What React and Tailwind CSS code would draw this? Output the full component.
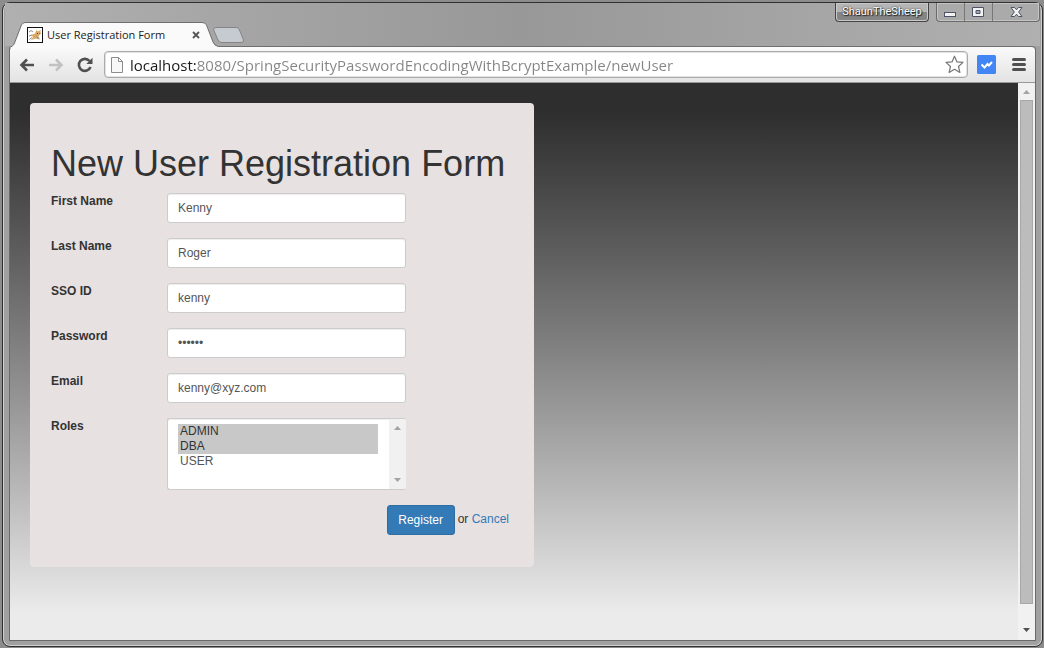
import React, { useState } from 'react';

function TabStrip() {
  return (
    <header className="flex h-[43px] shrink-0 items-start justify-between bg-linear-to-r from-[#b0b0b0] via-[#989898] to-[#b0b0b0] pl-1">
      <div className="flex pt-[19px]">
        <div className="relative h-[26px] w-[204px]">
          <svg className="absolute left-0 top-0" width="210" height="26" viewBox="0 0 210 26">
            <path d="M0 26 C3 24 4.500 24 5.500 21 L12 4 Q13 .5 16 .5 H193 Q196.500 .5 197.500 3 L204 20 Q205.500 24 209.500 24.500 V26 Z" fill="#fafafa" />
            <path d="M0 26 C3 24 4.500 24 5.500 21 L12 4 Q13 .5 16 .5 H193 Q196.500 .5 197.500 3 L204 20 Q205.500 24 209.500 24.500" fill="none" stroke="#6f6f6f" />
          </svg>
          <div className="relative flex h-[26px] items-center pl-[18px] pr-[13px]">
            <svg width="16" height="16" viewBox="0 0 16 16">
              <rect x=".5" y=".5" width="15" height="15" fill="#fff" stroke="#111" />
              <path d="M4 8 L8 6.500 L9.500 3 L11 4.500 L13.500 3 L13.500 7 L11.500 9 L13 12.500 L9 11.500 L4 13 L6 10 Z" fill="#d9a866" />
              <path d="M2 5 L4 3.500 L6 5 M2 9 L5 8 M2.500 12.500 L5 10.500 M9 9.500 L12 12" stroke="#8c8c8c" fill="none" />
              <path d="M10 6.500h1M12.500 6.500h.8" stroke="#6b4a22" />
            </svg>
            <span className="ml-1 flex-1 whitespace-nowrap font-['Open_Sans',sans-serif] text-[11px] text-[#222]">User Registration Form</span>
            <button type="button" aria-label="Close tab" className="text-[#555]">
              <svg width="8" height="8" viewBox="0 0 8 8">
                <path d="M1 1 L7 7 M7 1 L1 7" stroke="currentColor" strokeWidth="1.8" />
              </svg>
            </button>
          </div>
        </div>
        <button type="button" aria-label="New tab" className="mt-[5px] h-4">
          <svg width="32" height="16" viewBox="0 0 32 16">
            <path d="M3 .5 H23 Q25 .5 26 2 L30.5 13 Q31 15.500 28 15.500 H9 Q6 15.500 5 13 L.7 3 Q0 .5 3 .5 Z" fill="#c6cbd2" stroke="#858585" />
          </svg>
        </button>
      </div>

      <div className="flex items-start gap-[7px]">
        <button type="button" className="h-[19px] w-[94px] rounded-b border border-t-0 border-[#444] bg-linear-to-b from-[#b5b5b5] from-50% to-[#858585] to-50% font-['Roboto',sans-serif] text-[11px] leading-[18px] text-white shadow-[inset_0_0_0_1px_#c9c9c9] [text-shadow:0_0_2px_#222,1px_1px_1px_#222]">
          ShaunTheSheep
        </button>
        <div className="flex h-[19px] divide-x divide-[#777] rounded-b border border-t-0 border-[#6b6b6b] bg-[#aaaaaa] shadow-[inset_0_0_0_1px_#c4c4c4]">
          <button type="button" aria-label="Minimize" className="flex w-7 items-center justify-center">
            <svg width="13" height="12" viewBox="0 0 13 12">
              <rect x=".5" y="6.500" width="11" height="4" fill="#f2f2f2" stroke="#4d5266" />
            </svg>
          </button>
          <button type="button" aria-label="Maximize" className="flex w-7 items-center justify-center">
            <svg width="13" height="12" viewBox="0 0 13 12">
              <path d="M.5 1.500 H11.500 V10.500 H.5 Z M4 4.500 V7.500 H8 V4.500 Z" fill="#f2f2f2" fillRule="evenodd" stroke="#4d5266" />
            </svg>
          </button>
          <button type="button" aria-label="Close" className="flex w-[46px] items-center justify-center">
            <svg width="13" height="12" viewBox="0 0 13 12">
              <path d="M1 1.500 H4.500 L6.500 3.800 L8.500 1.500 H12 L8.600 6 L12 10.500 H8.500 L6.500 8.200 L4.500 10.500 H1 L4.400 6 Z" fill="#f4f4f4" stroke="#4d5266" />
            </svg>
          </button>
        </div>
      </div>
    </header>
  );
}

function Toolbar() {
  const [url, setUrl] = useState('localhost:8080/SpringSecurityPasswordEncodingWithBcryptExample/newUser');

  return (
    <nav className="flex h-[37px] shrink-0 items-center rounded-t border-b border-t border-b-[#999] border-t-[#6f6f6f] bg-linear-to-b from-[#fafafa] to-[#e3e3e3] pl-[9px] pr-[9px]">
      <button type="button" aria-label="Back" className="mr-[13px] text-[#505050]">
        <svg width="16" height="14" viewBox="0 0 16 14">
          <path d="M15 7 H3 M8 1.500 L2.500 7 L8 12.500" fill="none" stroke="currentColor" strokeWidth="2.600" />
        </svg>
      </button>
      <button type="button" aria-label="Forward" className="mr-[13px] text-[#c2c2c2]">
        <svg width="16" height="14" viewBox="0 0 16 14">
          <path d="M1 7 H13 M8 1.500 L13.500 7 L8 12.500" fill="none" stroke="currentColor" strokeWidth="2.600" />
        </svg>
      </button>
      <button type="button" aria-label="Reload" className="mr-[11px] text-[#505050]">
        <svg width="16" height="16" viewBox="0 0 16 16">
          <path d="M12.500 4 A6 6 0 1 0 13.500 10" fill="none" stroke="currentColor" strokeWidth="2.600" />
          <path d="M15.500 .8 V7 H9.300 Z" fill="currentColor" />
        </svg>
      </button>

      <div className="flex h-[27px] flex-1 items-center rounded-sm border border-[#ababab] bg-white pl-[6px] pr-[3px] shadow-[inset_0_0_0_1px_#e2e2e2]">
        <svg width="12" height="16" viewBox="0 0 12 16">
          <path d="M.5 .5 H7.500 L11.500 4.500 V15.500 H.5 Z M7.500 .5 V4.500 H11.500" fill="#f8f8f8" stroke="#8b8b8b" />
        </svg>
        <input
          type="text"
          aria-label="Address"
          value={url}
          onChange={(e) => setUrl(e.target.value)}
          className="ml-[7px] min-w-0 flex-1 bg-linear-to-r from-[#1b1b1b] from-[66px] to-[#858585] to-[66px] bg-clip-text font-['Open_Sans',sans-serif] text-[15px] leading-5 text-transparent outline-none"
        />
        <button type="button" aria-label="Bookmark">
          <svg width="19" height="19" viewBox="0 0 19 19">
            <path d="M9.500 1.200 L12 6.900 L18 7.400 L13.500 11.500 L14.900 17.500 L9.500 14.300 L4.100 17.500 L5.500 11.500 L1 7.400 L7 6.900 Z" fill="#fff" stroke="#777" strokeWidth="1.200" strokeLinejoin="round" />
          </svg>
        </button>
      </div>

      <button type="button" aria-label="Extension" className="ml-[9px]">
        <svg width="19" height="19" viewBox="0 0 19 19">
          <rect width="19" height="19" rx="1.500" fill="#4285f4" />
          <path d="M4.500 9.500 L7.500 12.500 L10.500 9 L12 10.500 L15 7" fill="none" stroke="#fff" strokeWidth="2" />
        </svg>
      </button>
      <button type="button" aria-label="Menu" className="ml-4 text-[#505050]">
        <svg width="14" height="13" viewBox="0 0 14 13">
          <path d="M1.500 1.500 H12.500 M1.500 6.500 H12.500 M1.500 11.500 H12.500" stroke="currentColor" strokeWidth="3" strokeLinecap="round" />
        </svg>
      </button>
    </nav>
  );
}

function Arrow({ up, className }) {
  return (
    <svg className={className} width="7" height="4" viewBox="0 0 7 4">
      <path d={up ? 'M0 4 L3.500 0 L7 4 Z' : 'M0 0 L3.500 4 L7 0 Z'} fill="currentColor" />
    </svg>
  );
}

const fields = [
  { id: 'firstName', label: 'First Name', type: 'text' },
  { id: 'lastName', label: 'Last Name', type: 'text' },
  { id: 'ssoId', label: 'SSO ID', type: 'text' },
  { id: 'password', label: 'Password', type: 'password' },
  { id: 'email', label: 'Email', type: 'text' },
];

function RegistrationForm() {
  const [user, setUser] = useState({
    firstName: 'Kenny',
    lastName: 'Roger',
    ssoId: 'kenny',
    password: 'secret',
    email: 'kenny@xyz.com',
  });
  const [roles, setRoles] = useState(['ADMIN', 'DBA']);

  const handleChange = (e) => {
    setUser({ ...user, [e.target.id]: e.target.value });
  };

  const handleRoles = (e) => {
    setRoles(Array.from(e.target.selectedOptions, (option) => option.value));
  };

  return (
    <form
      onSubmit={(e) => e.preventDefault()}
      className="w-[504px] rounded bg-[#e7e1e1] px-[21px] pb-8 pt-[41px] text-[12px] leading-[17px] text-[#333]"
    >
      <h1 className="mb-[9px] whitespace-nowrap text-[36px] leading-10">New User Registration Form</h1>

      <div className="flex flex-col gap-[15px]">
        {fields.map((field) => (
          <div key={field.id} className="flex items-start">
            <label htmlFor={field.id} className="w-[116px] font-bold">{field.label}</label>
            <input
              id={field.id}
              type={field.type}
              value={user[field.id]}
              onChange={handleChange}
              className="h-[30px] w-[239px] rounded-[3px] border border-[#ccc] bg-white px-[10px] text-[#555] shadow-[inset_0_1px_1px_rgba(0,0,0,0.075)]"
            />
          </div>
        ))}

        {/* Roles list with its own scrollbar */}
        <div className="flex items-start">
          <label htmlFor="roles" className="w-[116px] font-bold">Roles</label>
          <div className="flex h-[72px] w-[239px] overflow-hidden rounded-[3px] border border-r-0 border-[#ccc] bg-white shadow-[inset_0_1px_1px_rgba(0,0,0,0.075)]">
            <select
              id="roles"
              multiple
              size={4}
              value={roles}
              onChange={handleRoles}
              className="min-w-0 flex-1 appearance-none overflow-hidden bg-transparent py-[5px] pl-[10px] pr-[11px] text-[#555] outline-none"
            >
              {['ADMIN', 'DBA', 'USER'].map((role) => (
                <option
                  key={role}
                  value={role}
                  className="h-[15px] min-h-[15px] px-[2px] py-0 leading-[15px] checked:bg-[linear-gradient(#c8c8c8,#c8c8c8)] checked:text-[#333]"
                >
                  {role}
                </option>
              ))}
            </select>
            <div className="flex w-[17px] flex-col items-center justify-between bg-[#f1f1f1] py-[7px] text-[#a3a3a3]">
              <Arrow up />
              <Arrow />
            </div>
          </div>
        </div>
      </div>

      <div className="mt-[15px] flex items-start justify-end gap-[3px] pr-1">
        <button type="submit" className="h-[30px] w-[68px] rounded-[3px] border border-[#2e6da4] bg-[#337ab7] text-white">Register</button>
        <span className="pt-[6px]">or <a href="#list" className="text-[#337ab7]">Cancel</a></span>
      </div>
    </form>
  );
}

function App() {
  return (
    <div className="flex h-screen flex-col bg-[#8c8c8c] pb-px pl-[2px] pr-px pt-[2px] font-['Liberation_Sans',Arial,sans-serif]">
      <div className="flex min-h-0 flex-1 flex-col rounded-lg border border-[#303030] bg-[#a0a0a0] shadow-[inset_0_0_0_1px_#d0d0d0]">
        <div className="px-[2px]">
          <TabStrip />
        </div>
        <div className="mx-[6px] mb-[5px] flex min-h-0 flex-1 flex-col rounded-t border border-t-0 border-[#6a6a6a]">
          <Toolbar />
          <div className="flex min-h-0 flex-1">
            <main className="min-w-0 flex-1 overflow-hidden bg-linear-to-b from-[#2e2e2e] from-5% to-[#ebebeb] to-95% p-5">
              <RegistrationForm />
            </main>
            <div className="flex w-[17px] flex-col items-center bg-[#f1f1f1] pb-2 pt-[7px]">
              <Arrow up className="text-[#a3a3a3]" />
              <div className="mb-6 mt-[6px] w-[13px] flex-1 border border-[#a8a8a8] bg-[#bcbcbc]" />
              <Arrow className="text-[#505050]" />
            </div>
          </div>
        </div>
      </div>
    </div>
  );
}

export default App;
